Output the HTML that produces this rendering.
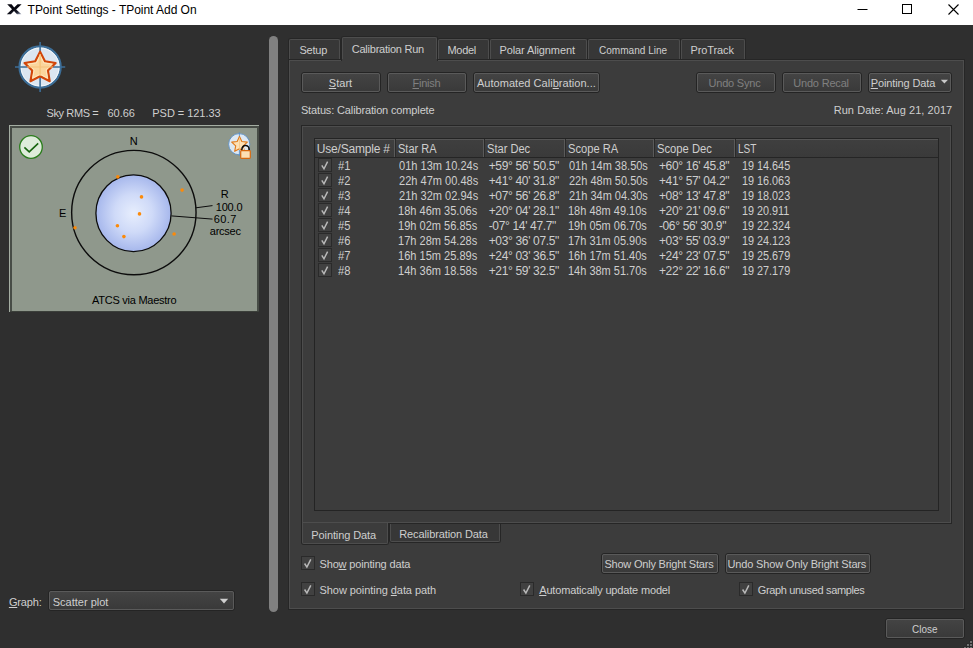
<!DOCTYPE html>
<html><head><meta charset="utf-8"><title>TPoint Settings - TPoint Add On</title>
<style>
html,body{margin:0;padding:0}
body{width:973px;height:648px;position:relative;overflow:hidden;background:#2f2f2f;font-family:"Liberation Sans", sans-serif;}
.a{position:absolute}
.t{position:absolute;white-space:pre;line-height:1;}
.t u{text-decoration:underline;text-underline-offset:1px;text-decoration-thickness:1px}
.btn{position:absolute;box-sizing:border-box;border:1px solid #242424;border-radius:3px;background:linear-gradient(#444444,#393939);}
.btn i{position:absolute;left:0;top:0;right:0;bottom:0;border:1px solid #5a5a5a;border-radius:2px;}
.cb{position:absolute;box-sizing:border-box;width:14px;height:14px;border:1px solid #2a2a2a;background:#414141;}
.tab{position:absolute;box-sizing:border-box;border:1px solid #262626;border-bottom:none;border-radius:3px 3px 0 0;background:#373737;}
.tab i{position:absolute;left:0;top:0;right:0;bottom:0;border:1px solid #4d4d4d;border-bottom:none;border-radius:2px 2px 0 0;}
.btab{position:absolute;box-sizing:border-box;border:1px solid #262626;border-top:none;border-radius:0 0 3px 3px;background:#373737;}
.btab i{position:absolute;left:0;top:0;right:0;bottom:0;border:1px solid #4d4d4d;border-top:none;border-radius:0 0 2px 2px;}
.frame{position:absolute;box-sizing:border-box;border:1px solid #262626;background:#3c3c3c;}
.frame i{position:absolute;left:0;top:0;right:0;bottom:0;border:1px solid #4d4d4d;}
</style></head><body>

<div class="a" style="left:0;top:0;width:973px;height:25px;background:#ffffff"></div>
<svg class="a" style="left:6px;top:3px" width="17" height="13" viewBox="0 0 17 13"><defs><linearGradient id="xg" x1="0.5" y1="0.45" x2="0.95" y2="1"><stop offset="0" stop-color="#07070f"/><stop offset="0.55" stop-color="#1a1d2c"/><stop offset="1" stop-color="#9aa3b8"/></linearGradient></defs><path d="M1.2 1.3 L5.6 1.3 L8.2 4.6 L11.6 1.3 L15.6 1.3 L10.2 6.4 L15.4 11.2 L11.0 11.2 L8.0 8.0 L4.8 11.2 L0.8 11.2 L6.0 6.3 Z" fill="url(#xg)"/></svg>
<svg class="a" style="left:850px;top:0" width="123" height="25" viewBox="0 0 123 25"><path d="M7.5 9.5 H17.5" stroke="#000" stroke-width="1" fill="none"/><rect x="52.5" y="4.5" width="9" height="9" stroke="#000" stroke-width="1" fill="none"/><path d="M98.5 4.5 L108.5 14.5 M108.5 4.5 L98.5 14.5" stroke="#000" stroke-width="1.1" fill="none"/></svg>
<svg class="a" style="left:10px;top:36px" width="60" height="62" viewBox="10 36 60 62">
<circle cx="40.1" cy="67" r="20.6" fill="#dbe6f1" stroke="#3c6e98" stroke-width="2.2"/>
<circle cx="40.1" cy="67" r="19" fill="none" stroke="#f4f8fb" stroke-width="1"/>
<path d="M40.1 42 V92 M15 67 H65.2" stroke="#3c6e98" stroke-width="1.6" fill="none"/>
<path d="M40.10 51.60 L44.98 61.29 L55.70 62.93 L47.99 70.56 L49.74 81.27 L40.10 76.30 L30.46 81.27 L32.21 70.56 L24.50 62.93 L35.22 61.29 Z" fill="#fbd59c" stroke="#d2460a" stroke-width="2.1" stroke-linejoin="round"/><path d="M40.10 55.40 L43.74 62.98 L52.08 64.11 L46.00 69.92 L47.51 78.19 L40.10 74.20 L32.69 78.19 L34.20 69.92 L28.12 64.11 L36.46 62.98 Z" fill="none" stroke="#fee6c0" stroke-width="1" stroke-linejoin="round"/>
<path d="M40.1 54 V76 M27 67 H53" stroke="#f6c27a" stroke-width="1.2" fill="none"/>
</svg>
<div class="a" style="left:9px;top:125px;width:250px;height:187px;background:#a4ada2"></div>
<div class="a" style="left:10px;top:126px;width:249px;height:186px;background:#474c46"></div>
<div class="a" style="left:10px;top:311px;width:249px;height:1px;background:#3b3f3a"></div>
<div class="a" style="left:12px;top:128px;width:245px;height:183px;background:#8f988c"></div>
<svg class="a" style="left:12px;top:128px" width="245" height="183" viewBox="12 128 245 183">
<defs><radialGradient id="g" cx="0.5" cy="0.5" r="0.5"><stop offset="0" stop-color="#e7eefd"/><stop offset="0.5" stop-color="#cfdaf8"/><stop offset="1" stop-color="#a6b7ec"/></radialGradient></defs>
<circle cx="133.85" cy="212.6" r="62.2" fill="none" stroke="#0c0c0c" stroke-width="1.4"/>
<ellipse cx="133.5" cy="213.2" rx="37.6" ry="38.4" fill="url(#g)" stroke="#0c0c0c" stroke-width="1.3"/>
<path d="M195.9 207.8 L212.5 205.6 M171.4 215.9 L212.5 219.1" stroke="#0c0c0c" stroke-width="1" fill="none"/>
<g fill="#fb8a0a">
<circle cx="117.8" cy="176.9" r="1.8"/><circle cx="141.5" cy="196.9" r="1.8"/><circle cx="139.5" cy="213.9" r="1.8"/>
<circle cx="117.4" cy="225.7" r="1.8"/><circle cx="123.9" cy="236.6" r="1.8"/><circle cx="182.1" cy="190.1" r="1.8"/>
<circle cx="174.1" cy="234" r="1.8"/><circle cx="75" cy="227.8" r="1.8"/></g>
<circle cx="31" cy="147" r="11.3" fill="#deecda" stroke="#2a7d1c" stroke-width="1.3"/>
<path d="M24.4 147.4 L29.2 151.9 L38.2 143.4" fill="none" stroke="#17640f" stroke-width="1.6"/>
<circle cx="239.2" cy="144.2" r="10.6" fill="#dde8f3" stroke="#5b8fc4" stroke-width="0.9"/>
<path d="M239.4 132.2 V155.8" stroke="#5b8fc4" stroke-width="0.9"/>
<path d="M239.50 136.50 L241.85 141.46 L247.30 142.17 L243.30 145.94 L244.32 151.33 L239.50 148.70 L234.68 151.33 L235.70 145.94 L231.70 142.17 L237.15 141.46 Z" fill="#fde0b5" stroke="#e07818" stroke-width="1.1" stroke-linejoin="round"/>
<path d="M239.5 137.5 V150" stroke="#f3c68a" stroke-width="0.8"/>
<path d="M241.9 151.2 V149.2 A3.6 3.6 0 0 1 249.1 149.2 V151.2" fill="none" stroke="#0a0a0a" stroke-width="1.5"/>
<path d="M243.4 151.2 V149.4 A2.1 2.1 0 0 1 247.6 149.4 V151.2" fill="none" stroke="#eeeeee" stroke-width="0.9"/>
<rect x="240.7" y="150.7" width="9.6" height="7.7" rx="0.8" fill="#fde0b5" stroke="#d8690f" stroke-width="1.2"/>
</svg>
<div class="a" style="left:269px;top:36px;width:9px;height:576px;border-radius:4.5px;background:#808080"></div>
<div class="frame" style="left:288px;top:59px;width:677px;height:551px"><i></i></div>
<div class="tab" style="left:288px;top:38px;width:53px;height:21px"><i></i></div>
<div class="tab" style="left:437px;top:38px;width:53px;height:21px"><i></i></div>
<div class="tab" style="left:489px;top:38px;width:99px;height:21px"><i></i></div>
<div class="tab" style="left:587px;top:38px;width:94px;height:21px"><i></i></div>
<div class="tab" style="left:680px;top:38px;width:66px;height:21px"><i></i></div>
<div class="tab" style="left:341px;top:36px;width:97px;height:25px;background:#3c3c3c"><i></i></div>
<div class="a" style="left:342px;top:59px;width:95px;height:2px;background:#3c3c3c"></div>
<div class="btn" style="left:301px;top:72px;width:80px;height:21px;"><i></i></div>
<div class="btn" style="left:387px;top:72px;width:80px;height:21px;"><i></i></div>
<div class="btn" style="left:473px;top:72px;width:127px;height:21px;"><i></i></div>
<div class="btn" style="left:696px;top:72px;width:80px;height:21px;"><i></i></div>
<div class="btn" style="left:782px;top:72px;width:80px;height:21px;"><i></i></div>
<div class="btn" style="left:868px;top:72px;width:84px;height:21px;"><i></i></div>
<svg class="a" style="left:940px;top:79px" width="9" height="6" viewBox="0 0 9 6"><path d="M0.8 0.8 H8 L4.4 4.6 Z" fill="#c8c8c8"/></svg>
<div class="frame" style="left:301px;top:125px;width:651px;height:399px"><i></i></div>
<div class="a" style="left:314px;top:138px;width:625px;height:373px;box-sizing:border-box;border:1px solid #242424;background:#3c3c3c"></div>
<div class="a" style="left:315px;top:139px;width:623px;height:18px;background:linear-gradient(#3f3f3f,#3a3a3a)"></div>
<div class="a" style="left:315px;top:139px;width:623px;height:1px;background:#555555"></div>
<div class="a" style="left:315px;top:157px;width:623px;height:1px;background:#252525"></div>
<div class="a" style="left:394px;top:139px;width:1px;height:18px;background:#5a5a5a"></div>
<div class="a" style="left:395px;top:139px;width:1px;height:18px;background:#2a2a2a"></div>
<div class="a" style="left:483px;top:139px;width:1px;height:18px;background:#5a5a5a"></div>
<div class="a" style="left:484px;top:139px;width:1px;height:18px;background:#2a2a2a"></div>
<div class="a" style="left:564px;top:139px;width:1px;height:18px;background:#5a5a5a"></div>
<div class="a" style="left:565px;top:139px;width:1px;height:18px;background:#2a2a2a"></div>
<div class="a" style="left:653px;top:139px;width:1px;height:18px;background:#5a5a5a"></div>
<div class="a" style="left:654px;top:139px;width:1px;height:18px;background:#2a2a2a"></div>
<div class="a" style="left:734px;top:139px;width:1px;height:18px;background:#5a5a5a"></div>
<div class="a" style="left:735px;top:139px;width:1px;height:18px;background:#2a2a2a"></div>
<div class="cb" style="left:318px;top:158px;width:14px;height:14px"></div>
<svg class="a" style="left:318px;top:158px" width="14" height="14" viewBox="0 0 14 14"><path d="M3.8 7.3 L6.0 10.8 L9.6 3.6" fill="none" stroke="#b9b9b9" stroke-width="1.45"/></svg>
<div class="cb" style="left:318px;top:173px;width:14px;height:14px"></div>
<svg class="a" style="left:318px;top:173px" width="14" height="14" viewBox="0 0 14 14"><path d="M3.8 7.3 L6.0 10.8 L9.6 3.6" fill="none" stroke="#b9b9b9" stroke-width="1.45"/></svg>
<div class="cb" style="left:318px;top:188px;width:14px;height:14px"></div>
<svg class="a" style="left:318px;top:188px" width="14" height="14" viewBox="0 0 14 14"><path d="M3.8 7.3 L6.0 10.8 L9.6 3.6" fill="none" stroke="#b9b9b9" stroke-width="1.45"/></svg>
<div class="cb" style="left:318px;top:203px;width:14px;height:14px"></div>
<svg class="a" style="left:318px;top:203px" width="14" height="14" viewBox="0 0 14 14"><path d="M3.8 7.3 L6.0 10.8 L9.6 3.6" fill="none" stroke="#b9b9b9" stroke-width="1.45"/></svg>
<div class="cb" style="left:318px;top:218px;width:14px;height:14px"></div>
<svg class="a" style="left:318px;top:218px" width="14" height="14" viewBox="0 0 14 14"><path d="M3.8 7.3 L6.0 10.8 L9.6 3.6" fill="none" stroke="#b9b9b9" stroke-width="1.45"/></svg>
<div class="cb" style="left:318px;top:233px;width:14px;height:14px"></div>
<svg class="a" style="left:318px;top:233px" width="14" height="14" viewBox="0 0 14 14"><path d="M3.8 7.3 L6.0 10.8 L9.6 3.6" fill="none" stroke="#b9b9b9" stroke-width="1.45"/></svg>
<div class="cb" style="left:318px;top:248px;width:14px;height:14px"></div>
<svg class="a" style="left:318px;top:248px" width="14" height="14" viewBox="0 0 14 14"><path d="M3.8 7.3 L6.0 10.8 L9.6 3.6" fill="none" stroke="#b9b9b9" stroke-width="1.45"/></svg>
<div class="cb" style="left:318px;top:263px;width:14px;height:14px"></div>
<svg class="a" style="left:318px;top:263px" width="14" height="14" viewBox="0 0 14 14"><path d="M3.8 7.3 L6.0 10.8 L9.6 3.6" fill="none" stroke="#b9b9b9" stroke-width="1.45"/></svg>
<div class="btab" style="left:389px;top:524px;width:112px;height:19px"><i></i></div>
<div class="btab" style="left:301px;top:523px;width:88px;height:22px;background:#3c3c3c"><i></i></div>
<div class="a" style="left:303px;top:523px;width:84px;height:1px;background:#3c3c3c"></div>
<div class="cb" style="left:301px;top:556px"></div><svg class="a" style="left:301px;top:556px" width="14" height="14" viewBox="0 0 14 14"><path d="M3.6 7.5 L5.9 11.1 L9.8 3.4" fill="none" stroke="#b9b9b9" stroke-width="1.5" stroke-linejoin="miter"/></svg>
<div class="cb" style="left:301px;top:582px"></div><svg class="a" style="left:301px;top:582px" width="14" height="14" viewBox="0 0 14 14"><path d="M3.6 7.5 L5.9 11.1 L9.8 3.4" fill="none" stroke="#b9b9b9" stroke-width="1.5" stroke-linejoin="miter"/></svg>
<div class="cb" style="left:520px;top:582px"></div><svg class="a" style="left:520px;top:582px" width="14" height="14" viewBox="0 0 14 14"><path d="M3.6 7.5 L5.9 11.1 L9.8 3.4" fill="none" stroke="#b9b9b9" stroke-width="1.5" stroke-linejoin="miter"/></svg>
<div class="cb" style="left:739px;top:582px"></div><svg class="a" style="left:739px;top:582px" width="14" height="14" viewBox="0 0 14 14"><path d="M3.6 7.5 L5.9 11.1 L9.8 3.4" fill="none" stroke="#b9b9b9" stroke-width="1.5" stroke-linejoin="miter"/></svg>
<div class="btn" style="left:601px;top:553px;width:118px;height:21px;"><i></i></div>
<div class="btn" style="left:725px;top:553px;width:146px;height:21px;"><i></i></div>
<div class="btn" style="left:885px;top:618px;width:80px;height:21px;"><i></i></div>
<div class="btn" style="left:48px;top:590px;width:187px;height:21px;"><i></i></div>
<svg class="a" style="left:219px;top:598px" width="10" height="7" viewBox="0 0 10 7"><path d="M0.8 0.8 H9.2 L5 5.6 Z" fill="#cfcfcf"/></svg>
<svg class="a" style="left:960px;top:636px" width="13" height="12" viewBox="960 636 13 12"><g fill="#262626"><rect x="969.4" y="640.4" width="2" height="2"/><rect x="966.4" y="643.4" width="2" height="2"/><rect x="969.4" y="643.4" width="2" height="2"/><rect x="963.4" y="646.4" width="2" height="2"/><rect x="966.4" y="646.4" width="2" height="2"/><rect x="969.4" y="646.4" width="2" height="2"/></g><g fill="#707070"><rect x="970" y="641" width="2" height="2"/><rect x="967" y="644" width="2" height="2"/><rect x="970" y="644" width="2" height="2"/><rect x="964" y="647" width="2" height="2"/><rect x="967" y="647" width="2" height="2"/><rect x="970" y="647" width="2" height="2"/></g></svg>
<div class="t" style="left:27.60px;top:4.00px;font-size:12px;color:#000000;letter-spacing:-0.030px;">TPoint Settings - TPoint Add On</div>
<div class="t" style="left:46.50px;top:108.00px;font-size:11px;color:#cecece;letter-spacing:-0.387px;">Sky RMS =</div>
<div class="t" style="left:107.50px;top:108.00px;font-size:11px;color:#cecece;letter-spacing:-0.050px;">60.66</div>
<div class="t" style="left:152.30px;top:108.00px;font-size:11px;color:#cecece;letter-spacing:-0.045px;">PSD = 121.33</div>
<div class="t" style="left:129.70px;top:136.00px;font-size:11px;color:#000000;">N</div>
<div class="t" style="left:58.90px;top:208.00px;font-size:11px;color:#000000;">E</div>
<div class="t" style="left:220.80px;top:189.00px;font-size:11px;color:#000000;">R</div>
<div class="t" style="left:215.70px;top:202.00px;font-size:11px;color:#000000;letter-spacing:-0.150px;">100.0</div>
<div class="t" style="left:213.70px;top:214.00px;font-size:11px;color:#000000;letter-spacing:0.400px;">60.7</div>
<div class="t" style="left:209.80px;top:226.00px;font-size:11px;color:#000000;letter-spacing:-0.260px;">arcsec</div>
<div class="t" style="left:92.00px;top:295.00px;font-size:11px;color:#000000;letter-spacing:-0.253px;">ATCS via Maestro</div>
<div class="t" style="left:8.90px;top:597.00px;font-size:11px;color:#cecece;letter-spacing:-0.160px;"><u>G</u>raph:</div>
<div class="t" style="left:52.80px;top:597.00px;font-size:11px;color:#cecece;letter-spacing:-0.009px;">Scatter plot</div>
<div class="t" style="left:299.40px;top:45.00px;font-size:11px;color:#cecece;letter-spacing:-0.200px;">Setup</div>
<div class="t" style="left:351.80px;top:44.00px;font-size:11px;color:#cecece;letter-spacing:-0.243px;">Calibration Run</div>
<div class="t" style="left:447.50px;top:45.00px;font-size:11px;color:#cecece;letter-spacing:-0.325px;">Model</div>
<div class="t" style="left:499.50px;top:45.00px;font-size:11px;color:#cecece;letter-spacing:-0.114px;">Polar Alignment</div>
<div class="t" style="left:598.90px;top:45.00px;font-size:11px;color:#cecece;transform:scaleX(0.9133);transform-origin:0 0;">Command Line</div>
<div class="t" style="left:690.40px;top:45.00px;font-size:11px;color:#cecece;letter-spacing:-0.086px;">ProTrack</div>
<div class="t" style="left:328.80px;top:78.00px;font-size:11px;color:#cecece;letter-spacing:0.025px;"><u>S</u>tart</div>
<div class="t" style="left:412.50px;top:78.00px;font-size:11px;color:#808080;letter-spacing:-0.260px;"><u>F</u>inish</div>
<div class="t" style="left:476.90px;top:78.00px;font-size:11px;color:#cecece;letter-spacing:0.039px;">Automated Cali<u>b</u>ration...</div>
<div class="t" style="left:708.50px;top:78.00px;font-size:11px;color:#808080;letter-spacing:-0.200px;">Undo Sync</div>
<div class="t" style="left:793.20px;top:78.00px;font-size:11px;color:#808080;letter-spacing:-0.178px;">Undo Recal</div>
<div class="t" style="left:870.70px;top:78.00px;font-size:11px;color:#cecece;letter-spacing:-0.108px;"><u>P</u>ointing Data</div>
<div class="t" style="left:300.90px;top:105.00px;font-size:11px;color:#cecece;letter-spacing:-0.141px;">Status: Calibration complete</div>
<div class="t" style="left:833.70px;top:105.00px;font-size:11px;color:#cecece;letter-spacing:0.052px;">Run Date: Aug 21, 2017</div>
<div class="t" style="left:316.80px;top:143.00px;font-size:12px;color:#cecece;letter-spacing:-0.200px;">Use/Sample #</div>
<div class="t" style="left:398.08px;top:143.00px;font-size:12px;color:#cecece;transform:scaleX(0.9170);transform-origin:0 0;">Star RA</div>
<div class="t" style="left:486.88px;top:143.00px;font-size:12px;color:#cecece;transform:scaleX(0.9239);transform-origin:0 0;">Star Dec</div>
<div class="t" style="left:567.87px;top:143.00px;font-size:12px;color:#cecece;transform:scaleX(0.9283);transform-origin:0 0;">Scope RA</div>
<div class="t" style="left:656.56px;top:143.00px;font-size:12px;color:#cecece;transform:scaleX(0.9361);transform-origin:0 0;">Scope Dec</div>
<div class="t" style="left:737.76px;top:143.00px;font-size:12px;color:#cecece;transform:scaleX(0.8381);transform-origin:0 0;">LST</div>
<div class="t" style="left:311.30px;top:530.00px;font-size:11px;color:#cecece;letter-spacing:-0.100px;">Pointing Data</div>
<div class="t" style="left:399.30px;top:529.00px;font-size:11px;color:#cecece;letter-spacing:-0.118px;">Recalibration Data</div>
<div class="t" style="left:319.50px;top:559.00px;font-size:11px;color:#cecece;letter-spacing:-0.159px;">Sho<u>w</u> pointing data</div>
<div class="t" style="left:319.50px;top:585.00px;font-size:11px;color:#cecece;letter-spacing:-0.064px;">Show pointing <u>d</u>ata path</div>
<div class="t" style="left:539.20px;top:585.00px;font-size:11px;color:#cecece;letter-spacing:-0.164px;"><u>A</u>utomatically update model</div>
<div class="t" style="left:757.80px;top:585.00px;font-size:11px;color:#cecece;letter-spacing:-0.353px;">Graph unused samples</div>
<div class="t" style="left:604.40px;top:559.00px;font-size:11px;color:#cecece;letter-spacing:-0.210px;">Show Only Bright Stars</div>
<div class="t" style="left:727.50px;top:559.00px;font-size:11px;color:#cecece;letter-spacing:-0.162px;">Undo Show Only Bright Stars</div>
<div class="t" style="left:912.00px;top:624.00px;font-size:11px;color:#cecece;transform:scaleX(0.9036);transform-origin:0 0;">Close</div>
<div class="t" style="left:337.90px;top:160.00px;font-size:12px;color:#cecece;transform:scaleX(0.9308);transform-origin:0 0;">#1</div>
<div class="t" style="left:399.40px;top:160.00px;font-size:12px;color:#cecece;transform:scaleX(0.9209);transform-origin:0 0;">01h 13m 10.24s</div>
<div class="t" style="left:488.70px;top:160.00px;font-size:12px;color:#cecece;letter-spacing:-0.338px;">+59° 56&#x27; 50.5&quot;</div>
<div class="t" style="left:569.30px;top:160.00px;font-size:12px;color:#cecece;transform:scaleX(0.9163);transform-origin:0 0;">01h 14m 38.50s</div>
<div class="t" style="left:658.90px;top:160.00px;font-size:12px;color:#cecece;letter-spacing:-0.346px;">+60° 16&#x27; 45.8&quot;</div>
<div class="t" style="left:741.90px;top:160.00px;font-size:12px;color:#cecece;transform:scaleX(0.9020);transform-origin:0 0;">19 14.645</div>
<div class="t" style="left:337.90px;top:175.00px;font-size:12px;color:#cecece;transform:scaleX(0.9308);transform-origin:0 0;">#2</div>
<div class="t" style="left:399.40px;top:175.00px;font-size:12px;color:#cecece;transform:scaleX(0.9209);transform-origin:0 0;">22h 47m 00.48s</div>
<div class="t" style="left:488.70px;top:175.00px;font-size:12px;color:#cecece;letter-spacing:-0.338px;">+41° 40&#x27; 31.8&quot;</div>
<div class="t" style="left:569.30px;top:175.00px;font-size:12px;color:#cecece;transform:scaleX(0.9163);transform-origin:0 0;">22h 48m 50.50s</div>
<div class="t" style="left:658.90px;top:175.00px;font-size:12px;color:#cecece;letter-spacing:-0.346px;">+41° 57&#x27; 04.2&quot;</div>
<div class="t" style="left:741.90px;top:175.00px;font-size:12px;color:#cecece;transform:scaleX(0.9020);transform-origin:0 0;">19 16.063</div>
<div class="t" style="left:337.90px;top:190.00px;font-size:12px;color:#cecece;transform:scaleX(0.9308);transform-origin:0 0;">#3</div>
<div class="t" style="left:399.40px;top:190.00px;font-size:12px;color:#cecece;transform:scaleX(0.9209);transform-origin:0 0;">21h 32m 02.94s</div>
<div class="t" style="left:488.70px;top:190.00px;font-size:12px;color:#cecece;letter-spacing:-0.338px;">+07° 56&#x27; 26.8&quot;</div>
<div class="t" style="left:569.30px;top:190.00px;font-size:12px;color:#cecece;transform:scaleX(0.9163);transform-origin:0 0;">21h 34m 04.30s</div>
<div class="t" style="left:658.90px;top:190.00px;font-size:12px;color:#cecece;letter-spacing:-0.346px;">+08° 13&#x27; 47.8&quot;</div>
<div class="t" style="left:741.90px;top:190.00px;font-size:12px;color:#cecece;transform:scaleX(0.9020);transform-origin:0 0;">19 18.023</div>
<div class="t" style="left:337.90px;top:205.00px;font-size:12px;color:#cecece;transform:scaleX(0.9308);transform-origin:0 0;">#4</div>
<div class="t" style="left:398.48px;top:205.00px;font-size:12px;color:#cecece;transform:scaleX(0.9200);transform-origin:0 0;">18h 46m 35.06s</div>
<div class="t" style="left:488.70px;top:205.00px;font-size:12px;color:#cecece;letter-spacing:-0.338px;">+20° 04&#x27; 28.1&quot;</div>
<div class="t" style="left:568.38px;top:205.00px;font-size:12px;color:#cecece;transform:scaleX(0.9153);transform-origin:0 0;">18h 48m 49.10s</div>
<div class="t" style="left:658.90px;top:205.00px;font-size:12px;color:#cecece;letter-spacing:-0.346px;">+20° 21&#x27; 09.6&quot;</div>
<div class="t" style="left:741.90px;top:205.00px;font-size:12px;color:#cecece;transform:scaleX(0.9001);transform-origin:0 0;">19 20.911</div>
<div class="t" style="left:337.90px;top:220.00px;font-size:12px;color:#cecece;transform:scaleX(0.9308);transform-origin:0 0;">#5</div>
<div class="t" style="left:398.48px;top:220.00px;font-size:12px;color:#cecece;transform:scaleX(0.9200);transform-origin:0 0;">19h 02m 56.85s</div>
<div class="t" style="left:488.70px;top:220.00px;font-size:12px;color:#cecece;letter-spacing:-0.338px;">-07° 14&#x27; 47.7&quot;</div>
<div class="t" style="left:568.38px;top:220.00px;font-size:12px;color:#cecece;transform:scaleX(0.9153);transform-origin:0 0;">19h 05m 06.70s</div>
<div class="t" style="left:658.90px;top:220.00px;font-size:12px;color:#cecece;letter-spacing:-0.346px;">-06° 56&#x27; 30.9&quot;</div>
<div class="t" style="left:741.90px;top:220.00px;font-size:12px;color:#cecece;transform:scaleX(0.9020);transform-origin:0 0;">19 22.324</div>
<div class="t" style="left:337.90px;top:235.00px;font-size:12px;color:#cecece;transform:scaleX(0.9308);transform-origin:0 0;">#6</div>
<div class="t" style="left:398.48px;top:235.00px;font-size:12px;color:#cecece;transform:scaleX(0.9200);transform-origin:0 0;">17h 28m 54.28s</div>
<div class="t" style="left:488.70px;top:235.00px;font-size:12px;color:#cecece;letter-spacing:-0.338px;">+03° 36&#x27; 07.5&quot;</div>
<div class="t" style="left:568.38px;top:235.00px;font-size:12px;color:#cecece;transform:scaleX(0.9153);transform-origin:0 0;">17h 31m 05.90s</div>
<div class="t" style="left:658.90px;top:235.00px;font-size:12px;color:#cecece;letter-spacing:-0.346px;">+03° 55&#x27; 03.9&quot;</div>
<div class="t" style="left:741.90px;top:235.00px;font-size:12px;color:#cecece;transform:scaleX(0.9020);transform-origin:0 0;">19 24.123</div>
<div class="t" style="left:337.90px;top:250.00px;font-size:12px;color:#cecece;transform:scaleX(0.9308);transform-origin:0 0;">#7</div>
<div class="t" style="left:398.48px;top:250.00px;font-size:12px;color:#cecece;transform:scaleX(0.9200);transform-origin:0 0;">16h 15m 25.89s</div>
<div class="t" style="left:488.70px;top:250.00px;font-size:12px;color:#cecece;letter-spacing:-0.338px;">+24° 03&#x27; 36.5&quot;</div>
<div class="t" style="left:568.38px;top:250.00px;font-size:12px;color:#cecece;transform:scaleX(0.9153);transform-origin:0 0;">16h 17m 51.40s</div>
<div class="t" style="left:658.90px;top:250.00px;font-size:12px;color:#cecece;letter-spacing:-0.346px;">+24° 23&#x27; 07.5&quot;</div>
<div class="t" style="left:741.90px;top:250.00px;font-size:12px;color:#cecece;transform:scaleX(0.9020);transform-origin:0 0;">19 25.679</div>
<div class="t" style="left:337.90px;top:265.00px;font-size:12px;color:#cecece;transform:scaleX(0.9308);transform-origin:0 0;">#8</div>
<div class="t" style="left:398.48px;top:265.00px;font-size:12px;color:#cecece;transform:scaleX(0.9200);transform-origin:0 0;">14h 36m 18.58s</div>
<div class="t" style="left:488.70px;top:265.00px;font-size:12px;color:#cecece;letter-spacing:-0.338px;">+21° 59&#x27; 32.5&quot;</div>
<div class="t" style="left:568.38px;top:265.00px;font-size:12px;color:#cecece;transform:scaleX(0.9153);transform-origin:0 0;">14h 38m 51.70s</div>
<div class="t" style="left:658.90px;top:265.00px;font-size:12px;color:#cecece;letter-spacing:-0.346px;">+22° 22&#x27; 16.6&quot;</div>
<div class="t" style="left:741.90px;top:265.00px;font-size:12px;color:#cecece;transform:scaleX(0.9020);transform-origin:0 0;">19 27.179</div>
</body></html>
